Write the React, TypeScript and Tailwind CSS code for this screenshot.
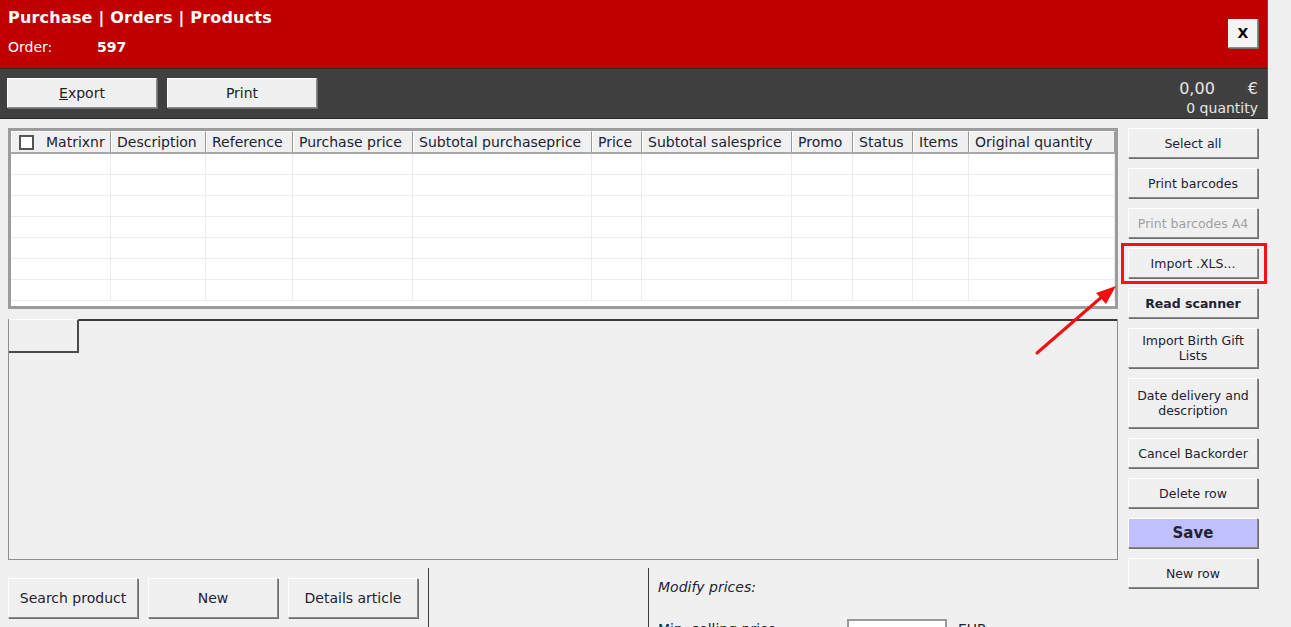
import { ReactNode } from 'react'

const font = { fontFamily: '"DejaVu Sans", Verdana, sans-serif' }

const columns = [
  { label: 'Matrixnr', w: 'w-[100px]', check: true },
  { label: 'Description', w: 'w-[95px]' },
  { label: 'Reference', w: 'w-[87px]' },
  { label: 'Purchase price', w: 'w-[120px]' },
  { label: 'Subtotal purchaseprice', w: 'w-[179px]' },
  { label: 'Price', w: 'w-[50px]' },
  { label: 'Subtotal salesprice', w: 'w-[150px]' },
  { label: 'Promo', w: 'w-[61px]' },
  { label: 'Status', w: 'w-[60px]' },
  { label: 'Items', w: 'w-[56px]' },
  { label: 'Original quantity', w: 'flex-1' },
]

function WinButton({ children, className = '' }: { children: ReactNode; className?: string }) {
  return (
    <button
      className={`flex items-center justify-center text-center leading-[15px] border border-t-white border-l-white border-r-[#8a8a8a] border-b-[#8a8a8a] shadow-[1px_1px_0_#6e6e6e] ${className}`}
    >
      {children}
    </button>
  )
}

export default function App() {
  return (
    <div className="relative w-[1291px] h-[627px] overflow-hidden bg-[#f0f0f0] text-[#222233]" style={font}>
      <div className="w-[1268px] h-full">
        {/* red header */}
        <div className="h-[69px] bg-[#c00000] border-b border-[#2a2a2a] border-r border-r-[#555] flex justify-between">
          <div className="pl-[8px] pt-[8px] text-white">
            <div className="text-[16px] font-bold leading-[20px] tracking-[0.2px]">Purchase | Orders | Products</div>
            <div className="flex text-[14px] leading-[18px] mt-[10px]">
              <span className="w-[89px]">Order:</span>
              <span className="font-bold">597</span>
            </div>
          </div>
          <div className="pt-[19px] pr-[9px]">
            <WinButton className="w-[30px] h-[29px] bg-[#f4f4f4] text-[14px] font-bold text-black">X</WinButton>
          </div>
        </div>

        {/* toolbar */}
        <div className="h-[50px] bg-[#404040] border-b border-[#2a2a2a] border-r border-r-[#555] flex justify-between">
          <div className="flex gap-[10px] pl-[7px] pt-[9px]">
            <WinButton className="w-[150px] h-[30px] bg-[#f0f0f0] text-[14px] text-[#222]">
              <span><span className="underline">E</span>xport</span>
            </WinButton>
            <WinButton className="w-[150px] h-[30px] bg-[#f0f0f0] text-[14px] text-[#222]">Print</WinButton>
          </div>
          <div className="pr-[9px] pt-[11px] text-[#e6e6e6] text-right">
            <div className="flex text-[16px] leading-[18px] justify-end">
              <span>0,00</span>
              <span className="ml-[33px]">€</span>
            </div>
            <div className="text-[14px] leading-[18px] mt-[1px]">0 quantity</div>
          </div>
        </div>

        {/* main area */}
        <div className="flex pt-[9px] pl-[8px]">
          <div className="w-[1110px] flex flex-col">
            {/* table */}
            <div className="h-[181px] border-[3px] border-[#9c9c9c] bg-white flex flex-col overflow-hidden">
              <div className="h-[23px] shrink-0 flex bg-[#f0f0f0] border-b-2 border-[#a8a8a8] text-[14px]">
                {columns.map(c => (
                  <div
                    key={c.label}
                    className={`${c.w} flex items-center border-l border-t border-l-white border-t-white border-r border-r-[#9a9a9a] px-[5px] whitespace-nowrap`}
                  >
                    {c.check && (
                      <span className="w-[15px] h-[15px] shrink-0 border-2 border-[#555] bg-white mr-[12px] ml-[2px]" />
                    )}
                    {c.label}
                  </div>
                ))}
              </div>
              {Array.from({ length: 7 }).map((_, r) => (
                <div key={r} className="h-[21px] flex border-b border-[#ececec] shrink-0">
                  {columns.map(c => (
                    <div key={c.label} className={`${c.w} border-r border-[#ececec]`} />
                  ))}
                </div>
              ))}
            </div>

            {/* tab panel */}
            <div className="mt-[10px] h-[241px] flex flex-col border-l border-r border-b border-[#8e8e8e]">
              <div className="flex">
                <div className="w-[70px] h-[34px] border-t border-t-white border-r-2 border-b-2 border-[#4a4a4a]" />
                <div className="flex-1 border-t-2 border-[#3a3a3a]" />
              </div>
              <div className="flex-1" />
            </div>

            {/* bottom */}
            <div className="flex mt-[8px]">
              <div className="flex gap-[10px] pt-[10px] w-[420px]">
                <WinButton className="w-[130px] h-[40px] text-[14px]">Search product</WinButton>
                <WinButton className="w-[130px] h-[40px] text-[14px]">New</WinButton>
                <WinButton className="w-[130px] h-[40px] text-[14px]">Details article</WinButton>
              </div>
              <div className="w-[220px] border-l border-[#404040] h-[60px]" />
              <div className="border-l border-[#404040] h-[60px] pl-[9px] pt-[10px] text-[14px]">
                <div className="italic leading-[18px]">Modify prices:</div>
                <div className="flex items-start mt-[23px] leading-[18px]">
                  <span className="w-[189px] pt-[1px]">Min. selling price:</span>
                  <span className="w-[100px] h-[22px] bg-white border-2 border-[#9a9a9a]" />
                  <span className="ml-[11px] pt-[1px]">EUR</span>
                </div>
              </div>
            </div>
          </div>

          {/* right buttons */}
          <div className="ml-[10px] w-[130px] flex flex-col gap-[10px] text-[12.5px]">
            <WinButton className="h-[30px]">Select all</WinButton>
            <WinButton className="h-[30px]">Print barcodes</WinButton>
            <WinButton className="h-[30px] text-[#a0a0a0]">Print barcodes A4</WinButton>
            <WinButton className="h-[30px]">Import .XLS...</WinButton>
            <WinButton className="h-[30px] font-bold">Read scanner</WinButton>
            <WinButton className="h-[40px] px-[6px]">Import Birth Gift Lists</WinButton>
            <WinButton className="h-[50px] px-[6px]">Date delivery and description</WinButton>
            <WinButton className="h-[30px] px-0 whitespace-nowrap">Cancel Backorder</WinButton>
            <WinButton className="h-[30px]">Delete row</WinButton>
            <WinButton className="h-[30px] bg-[#c0c0ff] font-bold text-[15px]">Save</WinButton>
            <WinButton className="h-[30px]">New row</WinButton>
          </div>
        </div>
      </div>

      {/* annotation: highlight box + arrow */}
      <div className="absolute left-[1121px] top-[243px] w-[146px] h-[41px] border-[3px] border-[#ff1010]" />
      <svg className="absolute left-0 top-0" width="1291" height="627">
        <line x1="1037" y1="353" x2="1104" y2="295" stroke="#f01010" strokeWidth="3" strokeLinecap="round" />
        <polygon points="1116,286 1096,293 1106,304" fill="#f01010" />
      </svg>
    </div>
  )
}
